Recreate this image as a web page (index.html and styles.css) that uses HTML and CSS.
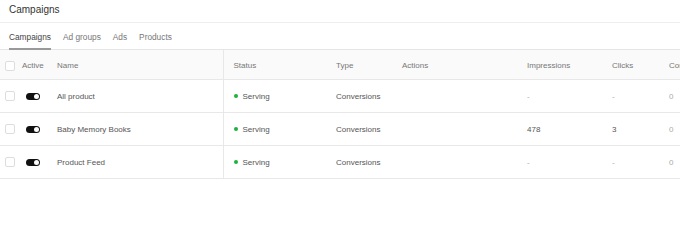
FILE: index.html
```html
<!DOCTYPE html>
<html lang="en">

<head>
    <meta charset="UTF-8">
    <meta name="viewport" content="width=device-width, initial-scale=1.0">
    <title>Campaigns</title>
    <link rel="stylesheet" href="styles.css">
</head>

<body>
    <header class="page-title">Campaigns</header>
    <nav class="tabs">
        <a class="tab active" href="#">Campaigns</a>
        <a class="tab" href="#">Ad groups</a>
        <a class="tab" href="#">Ads</a>
        <a class="tab" href="#">Products</a>
    </nav>
    <div class="table-wrap">
        <table class="grid">
            <colgroup>
                <col class="c-check">
                <col class="c-active">
                <col class="c-name">
                <col class="c-status">
                <col class="c-type">
                <col class="c-actions">
                <col class="c-impr">
                <col class="c-clicks">
                <col class="c-conv">
            </colgroup>
            <thead>
                <tr>
                    <th><span class="checkbox"></span></th>
                    <th>Active</th>
                    <th class="sticky-end">Name</th>
                    <th class="pad">Status</th>
                    <th>Type</th>
                    <th>Actions</th>
                    <th>Impressions</th>
                    <th>Clicks</th>
                    <th class="last">Conversions</th>
                </tr>
            </thead>
            <tbody>
                <tr>
                    <td><span class="checkbox"></span></td>
                    <td><span class="toggle"></span></td>
                    <td class="sticky-end">All product</td>
                    <td class="pad"><span class="dot"></span>Serving</td>
                    <td>Conversions</td>
                    <td></td>
                    <td class="muted">-</td>
                    <td class="muted">-</td>
                    <td class="muted">0</td>
                </tr>
                <tr>
                    <td><span class="checkbox"></span></td>
                    <td><span class="toggle"></span></td>
                    <td class="sticky-end">Baby Memory Books</td>
                    <td class="pad"><span class="dot"></span>Serving</td>
                    <td>Conversions</td>
                    <td></td>
                    <td>478</td>
                    <td>3</td>
                    <td class="muted">0</td>
                </tr>
                <tr>
                    <td><span class="checkbox"></span></td>
                    <td><span class="toggle"></span></td>
                    <td class="sticky-end">Product Feed</td>
                    <td class="pad"><span class="dot"></span>Serving</td>
                    <td>Conversions</td>
                    <td></td>
                    <td class="muted">-</td>
                    <td class="muted">-</td>
                    <td class="muted">0</td>
                </tr>
            </tbody>
        </table>
    </div>
</body>

</html>
```

FILE: styles.css
```css
body {
    margin: 0;
    background-color: #fff;
    color: #555;
    font-family: "Liberation Sans", Arial, sans-serif;
    font-size: 8px;
    overflow: hidden;
}

.page-title {
    height: 22px;
    padding-left: 9px;
    line-height: 20px;
    font-size: 10px;
    color: #333;
    border-bottom: 1px solid #eee;
}

.tabs {
    display: flex;
    gap: 12px;
    height: 26px;
    padding-left: 9px;
    font-size: 8.3px;
    border-bottom: 1px solid #e6e6e6;
}

.tab {
    display: flex;
    align-items: center;
    padding-top: 2px;
    color: #777;
    text-decoration: none;
    border-bottom: 2px solid transparent;
    margin-bottom: -1px;
}

.tab.active {
    color: #444;
    border-bottom-color: #999;
}

.table-wrap {
    width: 680px;
    overflow: hidden;
}

.grid {
    table-layout: fixed;
    border-collapse: collapse;
    width: 900px;
}

.c-check { width: 22px; }
.c-active { width: 35px; }
.c-name { width: 166px; }
.c-status { width: 113px; }
.c-type { width: 66px; }
.c-actions { width: 125px; }
.c-impr { width: 85px; }
.c-clicks { width: 57px; }
.c-conv { width: 231px; }

th, td {
    padding: 0;
    text-align: left;
    white-space: nowrap;
    border-bottom: 1px solid #e8e8e8;
}

th {
    height: 27px;
    padding-top: 2px;
    background-color: #fafafa;
    font-weight: normal;
    color: #777;
}

td {
    height: 32px;
}

.sticky-end {
    border-right: 1px solid #e8e8e8;
}

.pad {
    padding-left: 10px;
}

.muted {
    color: #aaa;
}

.checkbox {
    display: block;
    width: 8px;
    height: 8px;
    margin-left: 5px;
    border: 1px solid #ddd;
    border-radius: 2px;
    background: #fff;
}

.toggle {
    display: block;
    position: relative;
    width: 14px;
    height: 7px;
    margin-left: 4px;
    border-radius: 4px;
    background-color: #111;
}

.toggle::after {
    content: "";
    position: absolute;
    right: 1px;
    top: 1px;
    width: 5px;
    height: 5px;
    border-radius: 50%;
    background-color: #fff;
}

.dot {
    display: inline-block;
    width: 4px;
    height: 4px;
    margin-right: 5px;
    vertical-align: middle;
    border-radius: 50%;
    background-color: #1db23a;
}
```
